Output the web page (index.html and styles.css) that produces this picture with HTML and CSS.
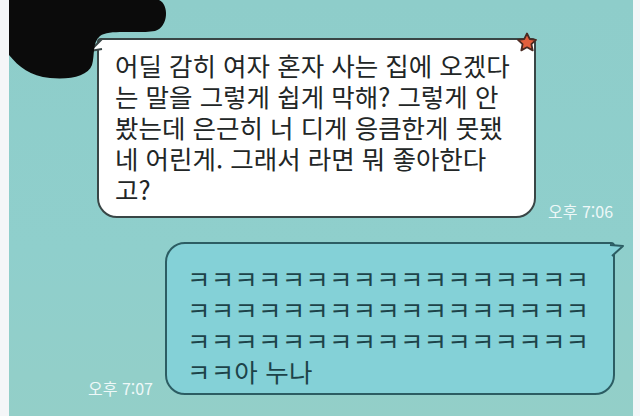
FILE: index.html
```html
<!DOCTYPE html>
<html lang="ko">
<head>
    <meta charset="UTF-8">
    <meta name="viewport" content="width=device-width, initial-scale=1.0">
    <title>채팅</title>
    <link rel="stylesheet" href="styles.css">
</head>
<body>
    <div class="screen">
        <div class="edge edge-left"></div>

        <main class="chat">
            <!-- 가려진 프로필 -->
            <svg class="redact" width="180" height="90" viewBox="0 0 180 90">
                <path d="M0,0 L150,0 C160,4 160,27 146,31 C126,34 100,29 91,36 C83,43 86,55 83,65 C79,76 61,80 41,78 C21,76 10,67 0,55 Z" fill="#0b0b0b"/>
            </svg>

            <div class="row row-in">
                <div class="bubble bubble-in">
                    <svg class="tail tail-in" width="14" height="16" viewBox="0 0 14 16">
                        <path d="M13,1 L1,13 L13,11" fill="#fff" stroke="#394646" stroke-width="2" stroke-linejoin="round"/>
                    </svg>
                    <svg class="star" width="24" height="24" viewBox="0 0 24 24">
                        <path d="M12,2.5 L14.8,8.2 L21,8.9 L16.4,13.2 L17.7,19.4 L12,16.3 L6.3,19.4 L7.6,13.2 L3,8.9 L9.2,8.2 Z" fill="#e35f3c" stroke="#4a2a22" stroke-width="1.8" stroke-linejoin="round"/>
                    </svg>
                    <p class="msg">어딜 감히 여자 혼자 사는 집에 오겠다<br>는 말을 그렇게 쉽게 막해? 그렇게 안<br>봤는데 은근히 너 디게 응큼한게 못됐<br>네 어린게. 그래서 라면 뭐 좋아한다<br>고?</p>
                </div>
                <span class="time">오후 7:06</span>
            </div>

            <div class="row row-out">
                <span class="time">오후 7:07</span>
                <div class="bubble bubble-out">
                    <svg class="tail tail-out" width="16" height="16" viewBox="0 0 16 16">
                        <path d="M1,2 L14,3 L3,13" fill="#84d1d7" stroke="#2c5d63" stroke-width="2" stroke-linejoin="round"/>
                    </svg>
                    <p class="msg msg-out">ㅋㅋㅋㅋㅋㅋㅋㅋㅋㅋㅋㅋㅋㅋㅋㅋㅋ<br>ㅋㅋㅋㅋㅋㅋㅋㅋㅋㅋㅋㅋㅋㅋㅋㅋㅋ<br>ㅋㅋㅋㅋㅋㅋㅋㅋㅋㅋㅋㅋㅋㅋㅋㅋㅋ<br>ㅋㅋ아 누나</p>
                </div>
            </div>
        </main>

        <div class="edge edge-right"></div>
    </div>
</body>
</html>
```

FILE: styles.css
```css
body {
    margin: 0;
    padding: 0;
    font-family: "Noto Sans CJK KR", "Noto Sans", sans-serif;
    background: #f4f6f8;
}

.screen {
    display: flex;
    width: 640px;
    height: 416px;
    overflow: hidden;
}

.edge {
    background: #f4f6f8;
}

.edge-left {
    width: 9px;
}

.edge-right {
    width: 7px;
}

.chat {
    position: relative;
    flex: 1;
    display: flex;
    flex-direction: column;
    gap: 24px;
    padding-top: 38px;
    background: linear-gradient(180deg, #8ecdca 0%, #8fcfcc 60%, #93cfc8 100%);
}

.redact {
    position: absolute;
    left: 0;
    top: 0;
    z-index: 3;
}

.row {
    display: flex;
    align-items: flex-end;
    gap: 12px;
}

.row-in {
    padding-left: 88px;
}

.row-out {
    justify-content: flex-end;
    padding-right: 18px;
}

.bubble {
    position: relative;
    box-sizing: border-box;
    border-radius: 20px;
}

.bubble-in {
    width: 439px;
    background: #ffffff;
    border: 2px solid #394646;
    border-top-left-radius: 4px;
    border-top-right-radius: 4px;
    padding: 9px 8px 12px 16px;
}

.bubble-out {
    width: 450px;
    background: #84d1d7;
    border: 2px solid #2c5d63;
    border-top-right-radius: 4px;
    padding: 18px 8px 7px 20px;
}

.msg {
    margin: 0;
    white-space: nowrap;
    font-size: 25.5px;
    line-height: 31px;
    color: #222626;
}

.msg-out {
    color: #1d4349;
    letter-spacing: 0.2px;
}

.tail {
    position: absolute;
    z-index: 2;
}

.tail-in {
    left: -10px;
    top: -2px;
}

.tail-out {
    right: -12px;
    top: -1px;
}

.star {
    position: absolute;
    right: -5px;
    top: -9px;
}

.time {
    font-size: 16px;
    line-height: 20px;
    color: #eef8f8;
    white-space: nowrap;
    margin-bottom: -3px;
}
```
